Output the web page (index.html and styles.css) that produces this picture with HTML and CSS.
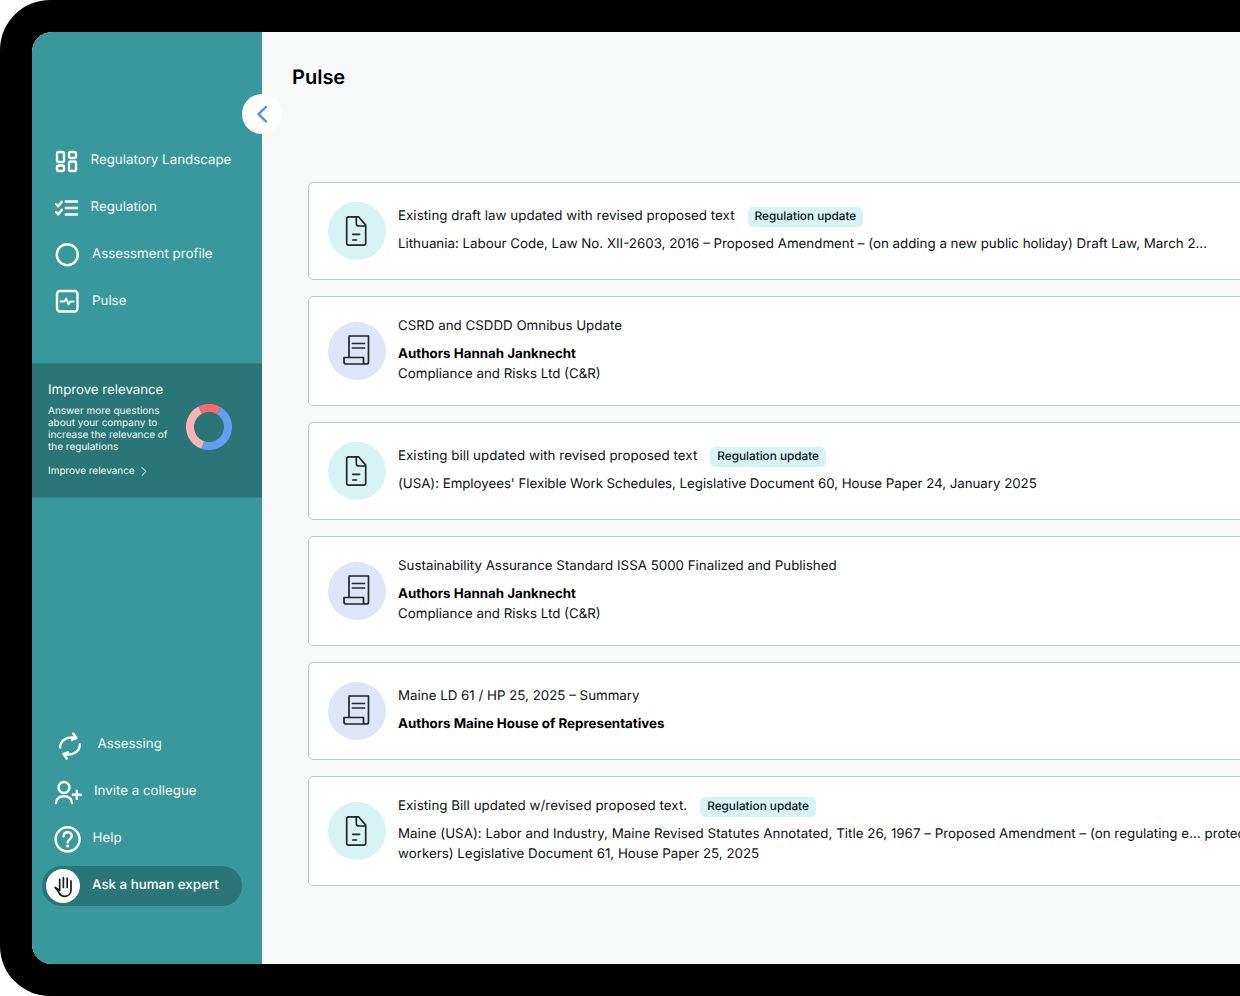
FILE: index.html
```html
<!DOCTYPE html>
<html lang="en">
<head>
<meta charset="utf-8">
<title>Pulse</title>
<link rel="stylesheet" href="styles.css">
</head>
<body>
<svg class="defs" aria-hidden="true">
  <symbol id="doc" viewBox="0 0 58 58"><path d="M20.500 14.800h10l7.200 8.200v18.300a1.800 1.800 0 0 1-1.800 1.800H20.500a1.800 1.800 0 0 1-1.800-1.800V16.600a1.800 1.800 0 0 1 1.800-1.800z M28.300 15v6.500a2.500 2.500 0 0 0 2.500 2.500h6.500M24.800 32.300h6.700M24.800 38h3.700"/></symbol>
  <symbol id="scroll" viewBox="0 0 58 58"><path d="M21 35.500V14h19.500v26a2 2 0 0 1-2 2H18a2 2 0 0 1-2-2v-4.500h19.500V40a2 2 0 0 0 2 2M24.500 21.500h12M24.500 26h12"/></symbol>
</svg>
<div class="device">
  <div class="screen">
    <aside class="sidebar">
      <nav class="nav">
        <a class="nav-item"><svg class="icon" viewBox="42 137 44 47"><rect x="57" y="152" width="7" height="10" rx="1.800"/><rect x="69" y="152" width="7" height="6" rx="1.800"/><rect x="57" y="165.500" width="7" height="5.500" rx="1.800"/><rect x="69" y="161.500" width="7" height="9.500" rx="1.800"/></svg><span class="label label-landscape">Regulatory Landscape</span></a>
        <a class="nav-item"><svg class="icon" viewBox="42 184 44 47"><path d="M65.800 201.500h11.200M65.800 208h11.200M65.800 214.500h11.200M56 204l2.300 2.300 3.500-4.500M56 212l2.300 2.300 3.500-4.500"/></svg><span class="label label-regulation">Regulation</span></a>
        <a class="nav-item"><svg class="icon" viewBox="42 231 44 47"><circle cx="67.300" cy="254.700" r="10.500"/></svg><span class="label label-profile">Assessment profile</span></a>
        <a class="nav-item"><svg class="icon" viewBox="42 278 44 47"><rect x="57" y="291" width="20.500" height="20.500" rx="3"/><path class="thin" d="M60.500 301.500h4l1.800-3 2.200 6 1.700-3h3.500"/></svg><span class="label label-pulse">Pulse</span></a>
      </nav>
      <section class="relevance">
        <div class="relevance-text">
          <h2>Improve relevance</h2>
          <p>Answer more questions<br>about your company to<br>increase the relevance of<br>the regulations</p>
          <a class="improve">Improve relevance <svg viewBox="0 0 6 9"><path d="M1 .5l4 4-4 4"/></svg></a>
        </div>
        <svg class="donut" viewBox="0 0 46 46">
          <circle class="blue" cx="23" cy="23" r="19" pathLength="100" stroke-dasharray="46.500 53.500" transform="rotate(-58 23 23)"/>
          <circle class="pink" cx="23" cy="23" r="19" pathLength="100" stroke-dasharray="37 63" transform="rotate(109.400 23 23)"/>
          <circle class="red" cx="23" cy="23" r="19" pathLength="100" stroke-dasharray="16.500 83.500" transform="rotate(-117.400 23 23)"/>
        </svg>
      </section>
      <nav class="nav nav-bottom">
        <a class="nav-item"><svg class="icon" viewBox="42 721 44 47"><path d="M60.200 747.500c-.2-6.500 6.500-11.300 15.300-9.800M79.800 744.500c.2 6.500-6.500 11.300-15.300 9.800M73.300 733.500l3.200 4.500-4.500 1.500M66.700 758.500l-3.200-4.500 4.500-1.500"/></svg><span class="label label-assessing">Assessing</span></a>
        <a class="nav-item"><svg class="icon" viewBox="42 768 44 47"><circle cx="64" cy="787.500" r="5.500"/><path d="M56 803c.3-4.500 3.700-6.700 8-6.700s7.700 2.200 8 6.700M72.800 794.800h8M76.800 790.800v8"/></svg><span class="label label-invite">Invite a collegue</span></a>
        <a class="nav-item"><svg class="icon" viewBox="42 815 44 47"><circle cx="67.600" cy="839.300" r="12"/><path d="M63.600 836.300c.2-2.600 1.800-4 4.100-4s4.100 1.500 4.100 3.700c0 3-4.100 3.300-4.100 6.400"/><circle class="dot" cx="67.600" cy="846" r="1.500"/></svg><span class="label label-help">Help</span></a>
        <a class="expert"><span class="hand"><svg viewBox="0 0 34 34"><path d="M13.700 21V10.300M17.400 18.500V8.500M21.200 18.500V9.200M25 20.500v-8.700M13.700 21.500l-4.500-3M9.200 18.500c2 1.700 2.700 3.500 3.900 5.500 1.300 2.200 3 3.300 5.600 3.300 3.700 0 6.300-2.600 6.300-6.400v-1"/></svg></span><span class="label label-expert">Ask a human expert</span></a>
      </nav>
      <button class="collapse" aria-label="Collapse"><svg viewBox="0 0 40 40"><path d="M24 13l-7.500 7.200 7.500 7.200"/></svg></button>
    </aside>
    <main class="main">
      <h1>Pulse</h1>
      <div class="cards">
        <article class="card">
          <span class="badge mint"><svg><use href="#doc"/></svg></span>
          <div class="body"><div class="title"><span class="headline">Existing draft law updated with revised proposed text</span><span class="tag">Regulation update</span></div><p>Lithuania: Labour Code, Law No. XII-2603, 2016 – Proposed Amendment – (on adding a new public holiday) Draft Law, March 2...</p></div>
        </article>
        <article class="card tall">
          <span class="badge lilac"><svg><use href="#scroll"/></svg></span>
          <div class="body"><div class="title">CSRD and CSDDD Omnibus Update</div><p><b>Authors Hannah Janknecht</b><br>Compliance and Risks Ltd (C&amp;R)</p></div>
        </article>
        <article class="card">
          <span class="badge mint"><svg><use href="#doc"/></svg></span>
          <div class="body"><div class="title"><span class="headline">Existing bill updated with revised proposed text</span><span class="tag">Regulation update</span></div><p class="snug">(USA): Employees' Flexible Work Schedules, Legislative Document 60, House Paper 24, January 2025</p></div>
        </article>
        <article class="card tall">
          <span class="badge lilac"><svg><use href="#scroll"/></svg></span>
          <div class="body"><div class="title">Sustainability Assurance Standard ISSA 5000 Finalized and Published</div><p><b>Authors Hannah Janknecht</b><br>Compliance and Risks Ltd (C&amp;R)</p></div>
        </article>
        <article class="card">
          <span class="badge lilac"><svg><use href="#scroll"/></svg></span>
          <div class="body"><div class="title">Maine LD 61 / HP 25, 2025 – Summary</div><p><b>Authors Maine House of Representatives</b></p></div>
        </article>
        <article class="card tall">
          <span class="badge mint"><svg><use href="#doc"/></svg></span>
          <div class="body"><div class="title"><span class="headline">Existing Bill updated w/revised proposed text.</span><span class="tag">Regulation update</span></div><p><span class="wide">Maine (USA): Labor and Industry, Maine Revised Statutes Annotated, Title 26, 1967 – Proposed Amendment – (on regulating e... protec</span><br>workers) Legislative Document 61, House Paper 25, 2025</p></div>
        </article>
      </div>
    </main>
  </div>
</div>
</body>
</html>
```
FILE: styles.css
```css
* { box-sizing: border-box; }
body { margin: 0; background: #fff; font-family: Inter, "Liberation Sans", sans-serif; overflow: hidden; text-rendering: geometricPrecision; }
h1, h2, p { margin: 0; }
svg { display: block; fill: none; stroke-linecap: round; stroke-linejoin: round; }
.defs { position: absolute; width: 0; height: 0; }
.device { width: 1240px; height: 996px; background: #000; border-radius: 50px 0 0 50px; padding: 32px 0 32px 32px; }
.screen { display: flex; height: 932px; border-radius: 20px 0 0 20px; background: #f7f9f9; overflow: hidden; }

.sidebar { position: relative; flex: 0 0 230px; background: #38989b; display: flex; flex-direction: column; color: #f3f9f9; }
.nav { padding: 105px 0 0 10px; height: 331px; }
.nav-item { display: flex; align-items: center; height: 47px; white-space: nowrap; }
.icon { width: 44px; height: 47px; flex: none; stroke: #fff; stroke-width: 2.4; }
.icon .thin { stroke-width: 1.8; }
.icon .dot { fill: #fff; stroke: none; }
.label { font-size: 13.33px; line-height: 20px; font-weight: 400; padding-bottom: 2px; }
.label-landscape, .label-regulation { margin-left: 4.5px; }
.label-profile, .label-pulse { margin-left: 6px; }
.label-assessing { margin-left: 11.5px; }
.label-invite { margin-left: 8px; }
.label-help { margin-left: 6.5px; }
.nav-bottom { margin-top: 223px; padding-top: 0; height: auto; }
.nav-bottom .nav-item .label { padding-bottom: 1px; }
.expert { display: flex; align-items: center; width: 200px; height: 40px; margin-top: 4px; padding-left: 4px; border-radius: 20px; background: #2a7577; }
.hand { width: 34px; height: 34px; border-radius: 50%; background: #fff; }
.hand svg { stroke: #161d1d; stroke-width: 1.7; }
.label-expert { margin-left: 12px; font-weight: 500; color: #fff; }

.relevance { display: flex; align-items: center; height: 135px; padding: 0 30px 0 16px; justify-content: space-between; background: #2a7577; border: solid #328386; border-width: 1px 0; }
.relevance-text { white-space: nowrap; margin-top: -4px; }
h2 { font-size: 13.33px; font-weight: 400; line-height: 20px; letter-spacing: -.05px; }
.relevance p { margin-top: 5px; font-size: 10px; line-height: 12px; }
.improve { display: flex; align-items: center; gap: 6px; margin-top: 12px; font-size: 10px; line-height: 12px; letter-spacing: -.03px; }
.improve svg { width: 6px; height: 9px; stroke: #fff; }
.donut { width: 46px; height: 46px; flex: none; margin-top: -8px; stroke-width: 8; stroke-linecap: butt; }
.blue { stroke: #619ff3; }
.pink { stroke: #fab4b6; }
.red { stroke: #fa696b; }
.collapse { position: absolute; top: 62px; right: -20px; width: 40px; height: 40px; padding: 0; border: 0; border-radius: 50%; background: #fff; }
.collapse svg { stroke: #4997e8; stroke-width: 2.4; }

.main { flex: 1; min-width: 0; padding: 32px 0 0 30px; color: #0c1213; }
h1 { font-size: 20px; line-height: 26px; font-weight: 600; color: #000; }
.cards { display: grid; gap: 16px; margin: 92px -20px 0 16px; }
.card { display: flex; align-items: center; gap: 12px; height: 98px; padding-left: 19px; border: 1px solid #b9c7cf; border-radius: 5px; background: #fff; }
.card.tall { height: 110px; }
.badge { flex: none; width: 58px; height: 58px; border-radius: 50%; }
.badge svg { width: 58px; height: 58px; stroke: #20262a; stroke-width: 1.7; }
.mint { background: #d7f3f3; }
.lilac { background: #dfe5f8; }
.body { display: flex; flex-direction: column; gap: 8px; margin-top: -2px; font-size: 13.33px; line-height: 20px; white-space: nowrap; }
.title { display: flex; align-items: center; gap: 13px; height: 20px; }
.headline { letter-spacing: .04px; }
.snug { letter-spacing: -.045px; }
.wide { letter-spacing: .025px; }
.body b { font-weight: 700; color: #000; }
.tag { height: 20px; margin-top: 1px; padding: 0 7px; border-radius: 5px; background: #d7f3f3; font-size: 11.75px; line-height: 19px; font-weight: 500; }
```
